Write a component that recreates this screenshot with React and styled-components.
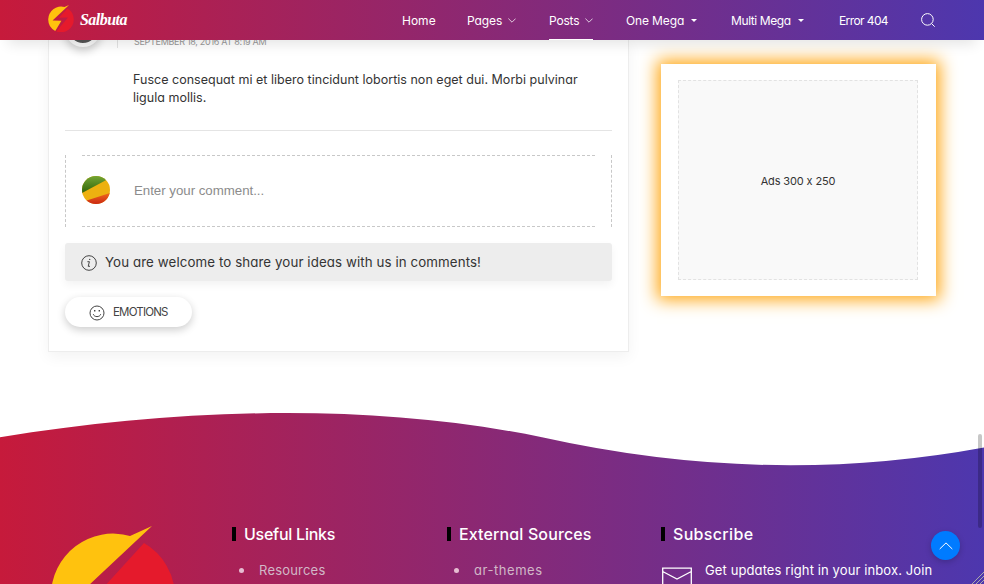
import React from 'react';
import styled, { createGlobalStyle } from 'styled-components';

const Global = createGlobalStyle`
  * { box-sizing: border-box; }
  body { margin: 0; overflow: hidden; background: #fff; color: #343434;
    font-family: Inter, sans-serif; font-feature-settings: "cv11", "calt" 0; font-size: 12px; }
`;
const brandGradient = 'linear-gradient(90deg, #c61a3b 0%, #4d37ae 100%)';

const Page = styled.div`position: relative; height: 584px; overflow: hidden; display: flex; flex-direction: column;`;
const Header = styled.header`position: relative; z-index: 2; flex: none; height: 40px; padding: 0 48px; display: flex; align-items: center;
  justify-content: space-between; color: #fff; background: ${brandGradient}; box-shadow: 0 12px 14px -8px rgba(0,0,0,.11);`;
const Brand = styled.a`display: flex; align-items: center; height: 40px;
  svg { width: 26px; height: 27px; margin-top: -3px; }`;
const BrandName = styled.span`margin-left: 6px; font: italic bold 16px/20px "Liberation Serif", serif; letter-spacing: -.55px;`;
const Nav = styled.nav`display: flex; height: 40px; margin-right: 1px;`;
const NavItem = styled.a`width: ${p => p.$w}px; height: 40px; display: flex; align-items: center;`;
const NavInner = styled.span`height: 40px; display: flex; align-items: center; gap: 6px; letter-spacing: ${p => p.$ls || 0}px; padding-top: 1px;
  border-bottom: 1px solid ${p => (p.$active ? '#fff' : 'transparent')};
  svg { opacity: .75; }`;
const Caret = styled.i`border: 3px solid transparent; border-top-color: #fff; border-bottom: 0; margin-left: 1px;`;

const Content = styled.main`flex: none; height: 360px; padding: 0 48px; display: flex; gap: 32px;`;
const Post = styled.article`width: 581px; height: 312px; padding: 0 16px; border: 1px solid #ededed; border-top: 0;
  box-shadow: 0 5px 14px rgba(0,0,0,.05);`;
const Comment = styled.section`height: 91px; border-bottom: 1px solid #e4e4e4; display: flex; overflow: visible;`;
const Portrait = styled.div`flex: none; width: 36px; height: 36px; margin-top: -29px; border-radius: 50%; border: 4px solid #f6f6f6; background: #555;
  box-shadow: 0 4px 8px rgba(0,0,0,.2);`;
const CommentText = styled.div`margin-left: 16px; border-left: 1px solid #e4e4e4; height: 8px; padding-left: 15px;`;
const Stamp = styled.div`font-size: 9px; line-height: 12px; margin: -4px 0 0 1px; color: #999; letter-spacing: ${p => p.$ls}px; white-space: nowrap;`;
const Body = styled.p`margin: 23px 0 0; font-size: 12.5px; line-height: 18px; letter-spacing: ${p => p.$ls}px; white-space: nowrap;`;
const CommentBox = styled.div`margin-top: 24px; height: 72px; padding: 0 16px; border: dashed #c8c8c8; border-width: 0 1px; display: flex;`;
const CommentInput = styled.div`flex: 1; border: dashed #c8c8c8; border-width: 1px 0; display: flex; align-items: center; gap: 24px; padding-bottom: 2px;
  color: #8c8c8c; font: 13.3px "Liberation Sans", sans-serif; letter-spacing: -.03px;`;
const Notice = styled.div`margin-top: 16px; height: 38px; padding: 1px 16px 0; border-radius: 3px; background: #ededed; display: flex; align-items: center; gap: 8px;
  font-size: 13.3px; letter-spacing: ${p => p.$ls}px; box-shadow: 0 4px 8px rgba(0,0,0,.05);
  span { margin-top: -1px; }`;
const Emotions = styled.button`margin: 16px 0 0; width: 127px; height: 30px; padding: 1px 0 0 24px; border: 0; border-radius: 15px; background: #fff; color: #444;
  display: flex; align-items: center; gap: 8px; font: 11.5px Inter, sans-serif; letter-spacing: -.8px; box-shadow: 0 3px 8px rgba(0,0,0,.2);
  span { margin-top: -1px; }`;
const AdCard = styled.aside`width: 275px; height: 232px; margin-top: 24px; padding: 16px 18px 16px 17px; background: #fff; box-shadow: 0 0 16px 4px #ffa816;`;
const AdSlot = styled.div`height: 200px; background: #f9f9f9; border: 1px dashed #e2e2e2; display: flex; align-items: center; justify-content: center;
  font-size: 11px; padding-top: 2px; letter-spacing: ${p => p.$ls}px;`;

const Footer = styled.footer`flex: none; height: 184px; padding: 112px 48px 0; display: grid; grid-template-columns: 184px 215px 214px 1fr; color: #fff;
  background: ${brandGradient}; clip-path: path("M0 37.3 C180 8 372 2 542 37.3 Q768 87.5 984 47.5 V184 H0 Z");`;
const FooterLogo = styled.div`margin: 14px 0 0 2px; svg { width: 126px; height: 131px; overflow: visible; }`;
const Column = styled.section`min-width: 0;`;
const Title = styled.h3`margin: 13px 0 0; height: 18px; display: flex; align-items: center; gap: 8px; font-size: 16px; font-weight: 500; letter-spacing: ${p => p.$ls}px; white-space: nowrap;
  &::before { content: ''; width: 4px; height: 14px; background: #000; }`;
const LinkRow = styled.div`margin: 17px 0 0 7px; height: 20px; display: flex; align-items: center; gap: 15px; font-size: 13px; color: #d1b8c7; letter-spacing: ${p => p.$ls}px;
  &::before { content: ''; width: 5px; height: 5px; border-radius: 50%; background: #e6bdd2; }`;
const Signup = styled.div`margin: 17px 0 0 1px; display: flex; gap: 13px; font-size: 13px; line-height: 20px; letter-spacing: ${p => p.$ls}px; white-space: nowrap;
  svg { flex: none; margin-top: 7px; }`;
const ToTop = styled.button`position: absolute; z-index: 3; left: 931px; top: 531px; width: 29px; height: 29px; padding: 0; border: 0; border-radius: 50%; background: #007bff;
  display: grid; place-items: center; box-shadow: 0 2px 6px rgba(0,0,0,.2);`;
const ScrollThumb = styled.div`position: absolute; z-index: 3; left: 978px; top: 434px; width: 4px; height: 94px; border-radius: 2px; background: rgba(0,0,0,.22);`;
const ResizeGrip = styled.svg`position: absolute; z-index: 3; right: 0; bottom: 0;`;

const LogoMark = () => (
  <svg viewBox="0 0 126 131">
    <path fill="#ffc20e" d="M102 0 L22 75 L65 76 L35 126 A62 62 0 0 1 1 70 A62 62 0 0 1 80 10 Z" />
    <path fill="#e51a2c" d="M94 17 A62 62 0 0 1 125 70 A62 62 0 0 1 40 128 L97 61 L53 62 Z" />
  </svg>
);
const Chevron = () => <svg width="8" height="5" viewBox="0 0 8 5" fill="none" stroke="#fff"><path d="M.4 .6 4 4.2 7.6 .6" /></svg>;

const FruitAvatar = () => (
  <svg width="28" height="28" viewBox="0 0 28 28">
    <defs>
      <clipPath id="round"><circle cx="14" cy="14" r="14" /></clipPath>
      <linearGradient id="leaf" x2="0" y2="1"><stop stopColor="#74a534" /><stop offset="1" stopColor="#2f6408" /></linearGradient>
      <linearGradient id="fire" x2="0" y2="1"><stop stopColor="#ef6a1b" /><stop offset="1" stopColor="#cb2714" /></linearGradient>
    </defs>
    <g clipPath="url(#round)">
      <path fill="#edb110" d="M0 0h28v28H0z" />
      <path fill="url(#leaf)" d="M0 0H28V2L0 17z" />
      <path fill="url(#fire)" d="M0 26 28 17V28H0z" />
    </g>
  </svg>
);

export default function App() {
  return (
    <Page>
      <Global />
      <Header>
        <Brand><LogoMark /><BrandName>Salbuta</BrandName></Brand>
        <Nav>
          <NavItem $w={65}><NavInner>Home</NavInner></NavItem>
          <NavItem $w={82}><NavInner $ls={-.1}>Pages<Chevron /></NavInner></NavItem>
          <NavItem $w={77}><NavInner $active $ls={-.2}>Posts<Chevron /></NavInner></NavItem>
          <NavItem $w={105}><NavInner $ls={-.13}>One Mega<Caret /></NavInner></NavItem>
          <NavItem $w={108}><NavInner $ls={-.4}>Multi Mega<Caret /></NavInner></NavItem>
          <NavItem $w={82}><NavInner $ls={-.6}>Error 404</NavInner></NavItem>
          <NavItem $w={14}>
            <svg width="14" height="14" viewBox="0 0 14 14" fill="none" stroke="#fff"><circle cx="6.4" cy="6.4" r="5.8" /><path d="m10.7 10.7 3 3" /></svg>
          </NavItem>
        </Nav>
      </Header>
      <Content>
        <Post>
          <Comment>
            <Portrait />
            <CommentText>
              <Stamp $ls={-.3}>SEPTEMBER 18, 2016 AT 8:19 AM</Stamp>
              <Body $ls={.02}>Fusce consequat mi et libero tincidunt lobortis non eget dui. Morbi pulvinar<br />ligula mollis.</Body>
            </CommentText>
          </Comment>
          <CommentBox><CommentInput><FruitAvatar /><span>Enter your comment...</span></CommentInput></CommentBox>
          <Notice $ls={.1}>
            <svg width="16" height="16" viewBox="0 0 16 16" fill="none" stroke="#444"><circle cx="8" cy="8" r="7.3" /><path d="M6.4 6.7H8.4L7.2 11.3H9" /><circle cx="8.7" cy="4.4" r=".7" fill="#444" stroke="none" /></svg>
            <span>You are welcome to share your ideas with us in comments!</span>
          </Notice>
          <Emotions>
            <svg width="16" height="16" viewBox="0 0 16 16" fill="none" stroke="#444"><circle cx="8" cy="8" r="7" /><path d="M4.3 9.2c.8 3.2 6.6 3.2 7.4 0" /><path d="M5 5.7h1.4M9.6 5.7H11" strokeWidth="1.4" /></svg>
            <span>EMOTIONS</span>
          </Emotions>
        </Post>
        <AdCard><AdSlot $ls={-.13}>Ads 300 x 250</AdSlot></AdCard>
      </Content>
      <Footer>
        <FooterLogo><LogoMark /></FooterLogo>
        <Column><Title $ls={-.25}>Useful Links</Title><LinkRow $ls={.2}>Resources</LinkRow></Column>
        <Column><Title $ls={.13}>External Sources</Title><LinkRow $ls={.55}>ar-themes</LinkRow></Column>
        <Column>
          <Title $ls={.33}>Subscribe</Title>
          <Signup $ls={.11}>
            <svg width="30" height="24" viewBox="0 0 30 24" fill="none" stroke="#fff" strokeWidth="1.3"><path d="M.7 1.2H29.3V23H.7zM.7 4.5 15 12 29.3 4.5" /></svg>
            <span>Get updates right in your inbox. Join</span>
          </Signup>
        </Column>
      </Footer>
      <ToTop><svg width="14" height="8" viewBox="0 0 14 8" fill="none" stroke="#fff"><path d="M.7 7 7 .9 13.3 7" /></svg></ToTop>
      <ScrollThumb />
      <ResizeGrip width="14" height="14" viewBox="0 0 14 14" stroke="#aaa"><path d="M2 14 14 2M6 14 14 6M10 14 14 10" /></ResizeGrip>
    </Page>
  );
}
